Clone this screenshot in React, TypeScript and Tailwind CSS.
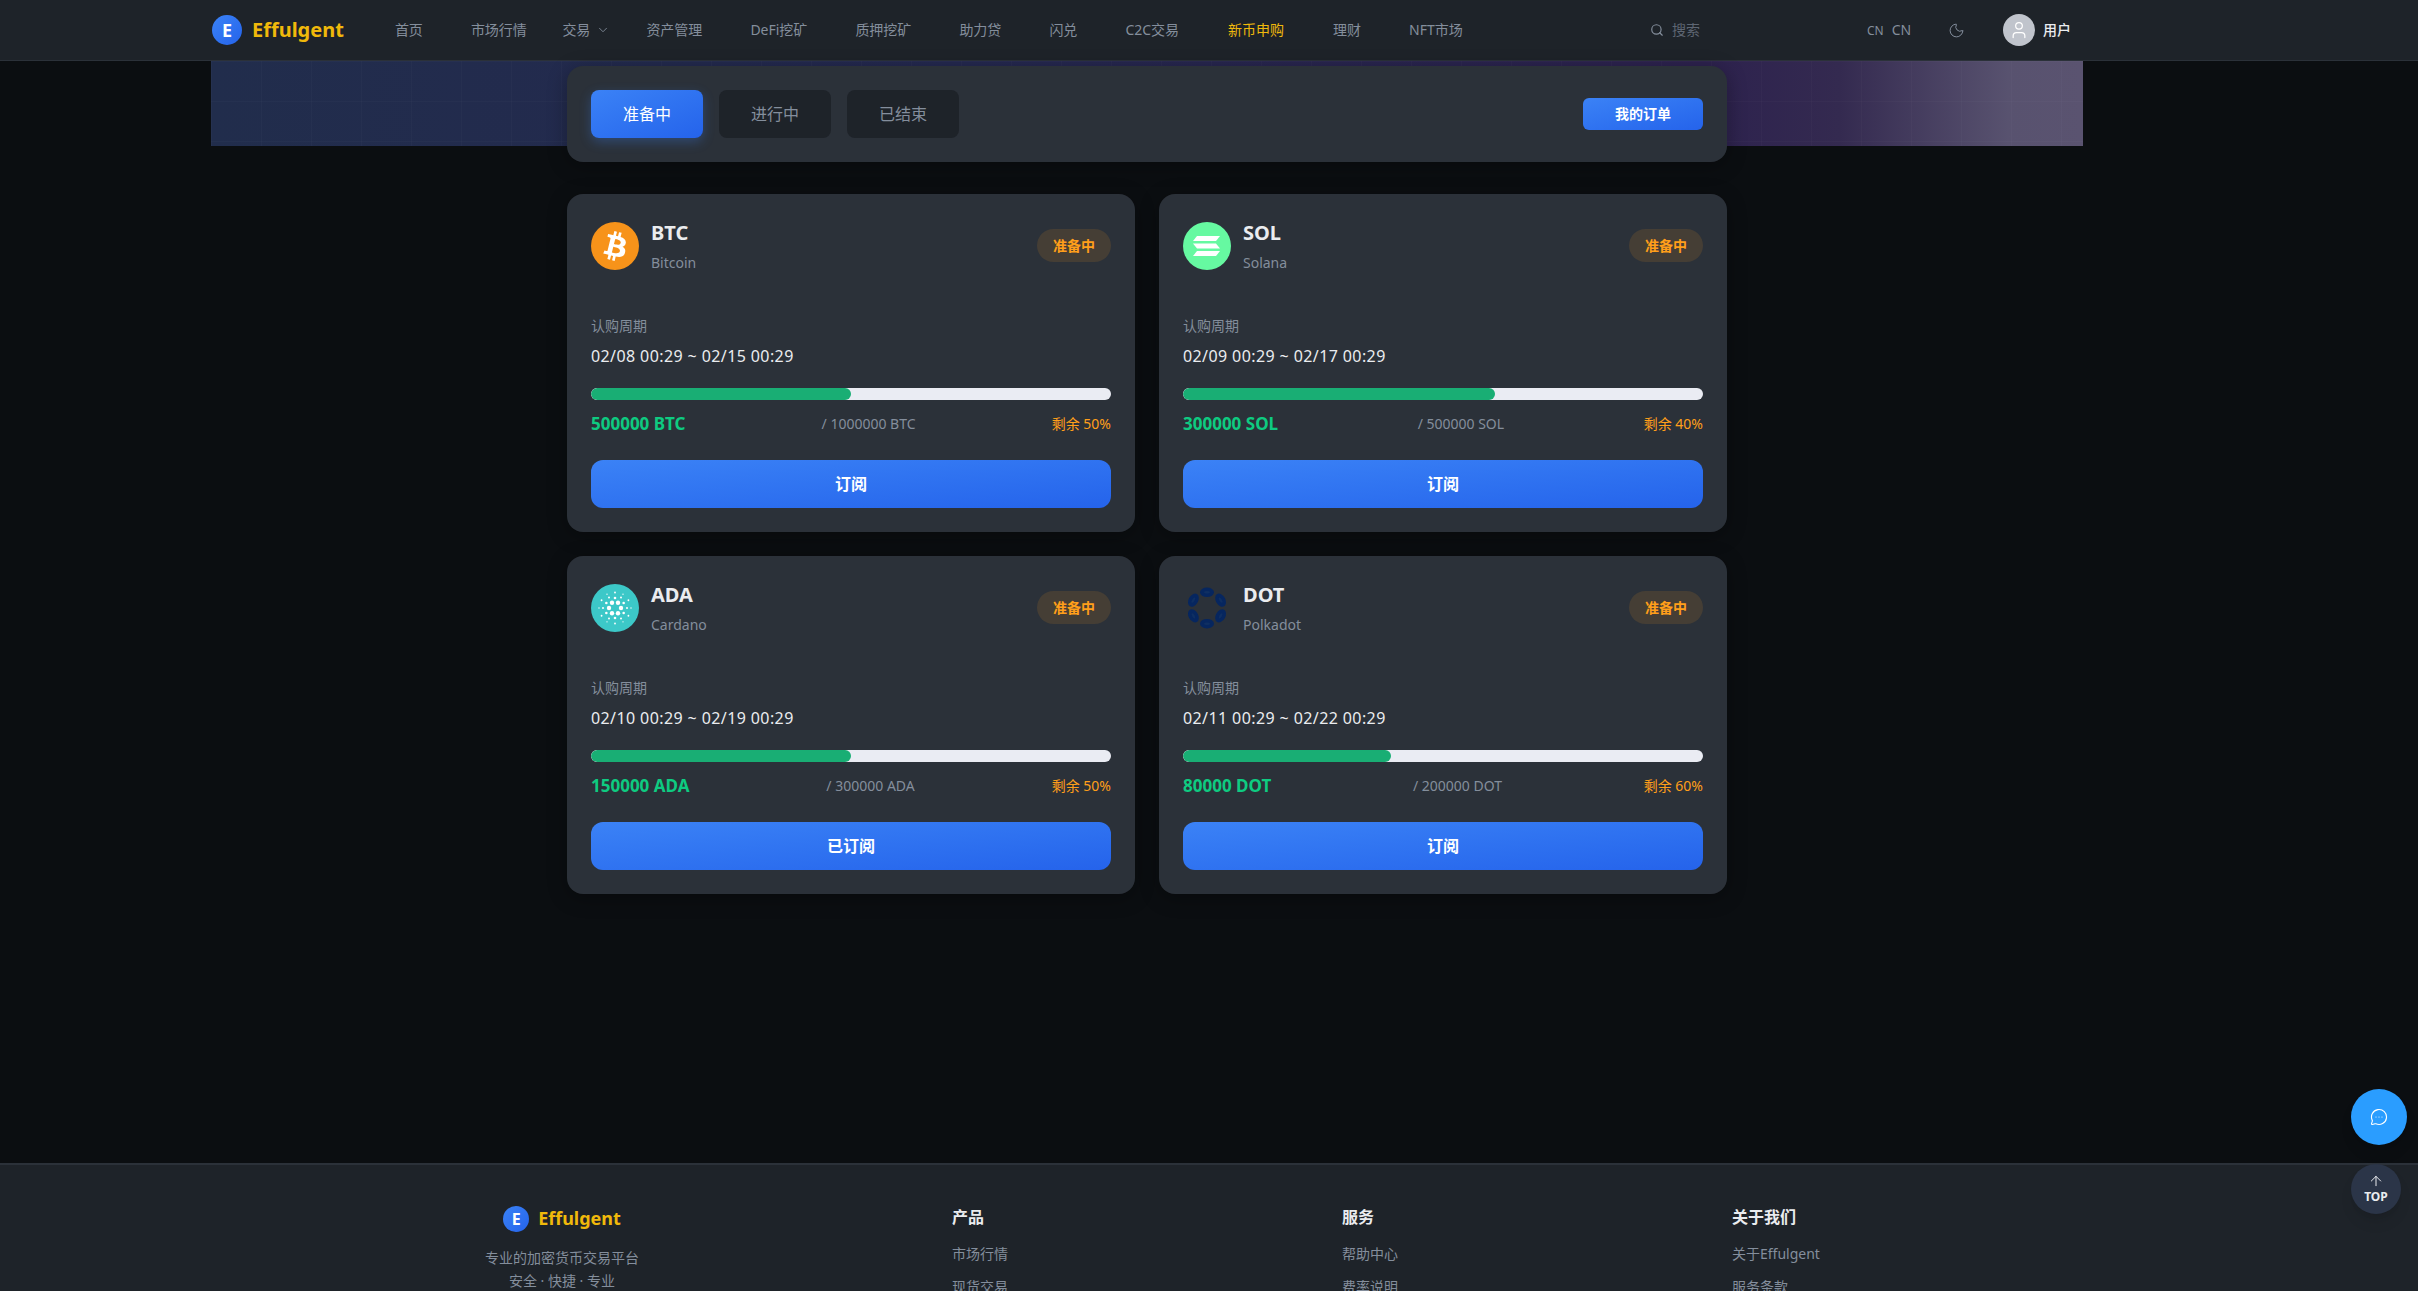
import React from 'react';
import { ArrowUp, ChevronDown, MessageCircleMore, Moon, Search, User } from 'lucide-react';

const navItems = ['首页', '市场行情', '交易', '资产管理', 'DeFi挖矿', '质押挖矿', '助力贷', '闪兑', 'C2C交易', '新币申购', '理财', 'NFT市场'];

const coins = [
  { symbol: 'BTC', name: 'Bitcoin', period: '02/08 00:29 ~ 02/15 00:29', pct: 50, sold: '500000 BTC', total: '/ 1000000 BTC', left: '剩余 50%', action: '订阅' },
  { symbol: 'SOL', name: 'Solana', period: '02/09 00:29 ~ 02/17 00:29', pct: 60, sold: '300000 SOL', total: '/ 500000 SOL', left: '剩余 40%', action: '订阅' },
  { symbol: 'ADA', name: 'Cardano', period: '02/10 00:29 ~ 02/19 00:29', pct: 50, sold: '150000 ADA', total: '/ 300000 ADA', left: '剩余 50%', action: '已订阅' },
  { symbol: 'DOT', name: 'Polkadot', period: '02/11 00:29 ~ 02/22 00:29', pct: 40, sold: '80000 DOT', total: '/ 200000 DOT', left: '剩余 60%', action: '订阅' },
];

const footerColumns = [
  { title: '产品', links: ['市场行情', '现货交易'] },
  { title: '服务', links: ['帮助中心', '费率说明'] },
  { title: '关于我们', links: ['关于Effulgent', '服务条款'] },
];

const ring = (count: number, radius: number, offset: number) =>
  Array.from({ length: count }, (_, i) => {
    const a = ((offset + (i * 360) / count) * Math.PI) / 180;
    return { x: 24 + radius * Math.cos(a), y: 24 + radius * Math.sin(a) };
  });

const CoinIcon: React.FC<{ symbol: string }> = ({ symbol }) => {
  if (symbol === 'BTC') {
    return (
      <svg viewBox="0 0 32 32" className="w-12 h-12 shrink-0">
        <circle cx="16" cy="16" r="16" fill="#f7931a" />
        <path
          fill="#fff"
          d="M23.189 14.02c.314-2.096-1.283-3.223-3.465-3.975l.708-2.84-1.728-.43-.69 2.765c-.454-.114-.92-.22-1.385-.326l.695-2.783L15.596 6l-.708 2.839c-.376-.086-.746-.17-1.104-.26l.002-.009-2.384-.595-.46 1.846s1.283.294 1.256.312c.7.175.826.638.805 1.006l-.806 3.235c.048.012.11.03.18.057l-.183-.045-1.13 4.532c-.086.212-.303.531-.793.41.018.025-1.256-.313-1.256-.313l-.858 1.978 2.25.561c.418.105.828.215 1.231.318l-.715 2.872 1.727.43.708-2.84c.472.127.93.245 1.378.357l-.706 2.828 1.728.43.715-2.866c2.948.558 5.164.333 6.097-2.333.752-2.146-.037-3.385-1.588-4.192 1.13-.26 1.98-1.003 2.207-2.538zm-3.95 5.538c-.533 2.147-4.148.986-5.32.695l.95-3.805c1.172.293 4.929.872 4.37 3.11zm.535-5.569c-.487 1.953-3.495.96-4.47.717l.86-3.45c.975.243 4.118.696 3.61 2.733z"
        />
      </svg>
    );
  }
  if (symbol === 'SOL') {
    return (
      <svg viewBox="0 0 48 48" className="w-12 h-12 shrink-0">
        <circle cx="24" cy="24" r="24" fill="#66f9a1" />
        <polygon fill="#fff" points="14,14 37,14 33,19 10,19" />
        <polygon fill="#fff" points="10,21.5 33,21.5 37,26.5 14,26.5" />
        <polygon fill="#fff" points="14,29 37,29 33,34 10,34" />
      </svg>
    );
  }
  if (symbol === 'ADA') {
    return (
      <svg viewBox="0 0 48 48" className="w-12 h-12 shrink-0">
        <circle cx="24" cy="24" r="24" fill="#3cc8c8" />
        {ring(6, 6, 0).map((d, i) => <circle key={i} cx={d.x} cy={d.y} r="2.2" fill="#fff" />)}
        {ring(6, 10, 30).map((d, i) => <circle key={i} cx={d.x} cy={d.y} r="1.3" fill="#fff" />)}
        {ring(6, 12, 0).map((d, i) => <circle key={i} cx={d.x} cy={d.y} r="1" fill="#fff" />)}
        {ring(6, 15.5, 30).map((d, i) => <circle key={i} cx={d.x} cy={d.y} r="0.9" fill="#fff" />)}
        {ring(6, 16, 0).map((d, i) => <circle key={i} cx={d.x} cy={d.y} r="0.7" fill="#fff" />)}
      </svg>
    );
  }
  return (
    <svg viewBox="0 0 48 48" className="w-12 h-12 shrink-0">
      {[0, 60, 120, 180, 240, 300].map((deg) => (
        <g key={deg} transform={`rotate(${deg} 24 24)`}>
          <ellipse cx="24" cy="8.3" rx="7" ry="4.8" fill="#06265f" />
          <ellipse cx="24" cy="8.3" rx="3" ry="1.2" fill="#0f2f62" />
        </g>
      ))}
    </svg>
  );
};

const Logo: React.FC<{ small?: boolean }> = ({ small }) => (
  <div className={small ? 'flex items-center gap-[9px]' : 'flex items-center gap-[10px]'}>
    <div className={small ? 'w-[26px] h-[26px] rounded-full bg-gradient-to-br from-[#3b82f6] to-[#2563eb] flex items-center justify-center text-white font-bold text-[16px] leading-none' : 'w-[30px] h-[30px] rounded-full bg-gradient-to-br from-[#3b82f6] to-[#2563eb] flex items-center justify-center text-white font-bold text-[18px] leading-none'}>
      E
    </div>
    <span className={small ? 'text-[18px] font-bold text-[#f0b90b]' : 'text-[20px] font-bold text-[#f0b90b]'}>Effulgent</span>
  </div>
);

const CoinCard: React.FC<{ coin: (typeof coins)[number] }> = ({ coin }) => (
  <div className="bg-[#2b3139] rounded-2xl p-6 h-[338px] shadow-[0_4px_20px_rgba(0,0,0,0.3)]">
    <div className="flex items-center justify-between h-[55px]">
      <div className="flex items-center gap-3">
        <CoinIcon symbol={coin.symbol} />
        <div>
          <div className="text-[20px] leading-[30px] font-bold text-[#eaecef]">{coin.symbol}</div>
          <div className="text-sm leading-[21px] mt-1 text-[#848e9c]">{coin.name}</div>
        </div>
      </div>
      <span className="px-4 py-1.5 rounded-[20px] bg-[#453e35] text-[#ff9f1a] text-sm leading-[21px] font-semibold">准备中</span>
    </div>
    <div className="mt-[42px] text-sm leading-[21px] text-[#848e9c]">认购周期</div>
    <div className="mt-2 text-base leading-6 tracking-[0.4px] text-[#eaecef]">{coin.period}</div>
    <div className="mt-5 h-3 rounded-md bg-[#eaecf3] overflow-hidden">
      <div className="h-full rounded-md bg-[#19ae74]" style={{ width: `${coin.pct}%` }} />
    </div>
    <div className="mt-3 h-6 flex items-center justify-between">
      <span className="text-[17px] font-bold text-[#0ecb81]">{coin.sold}</span>
      <span className="text-sm text-[#848e9c]">{coin.total}</span>
      <span className="text-sm text-[#ff9f1a]">{coin.left}</span>
    </div>
    <button className="mt-6 w-full h-12 rounded-xl bg-gradient-to-br from-[#3b82f6] to-[#2563eb] text-white text-base font-semibold">
      {coin.action}
    </button>
  </div>
);

export default function App() {
  return (
    <div className="relative h-[1291px] overflow-hidden flex flex-col bg-[#0b0e11] font-['Noto_Sans','Noto_Sans_CJK_SC',sans-serif]">
      <header className="h-[61px] shrink-0 bg-[#1e2329] border-b border-[#2b3139]">
        <div className="w-[2294px] h-full pl-[212px] pr-[223px] flex items-center">
          <Logo />
          <nav className="ml-[51px] flex items-center gap-12 text-sm text-[#848e9c]">
            {navItems.map((item) =>
              item === '交易' ? (
                <span key={item} className="-ml-[12.5px] -mr-[12px] flex items-center gap-[6px]">
                  {item}
                  <ChevronDown size={14} strokeWidth={1.5} />
                </span>
              ) : (
                <span key={item} className={item === '新币申购' ? 'ml-[1px] text-[#f0b90b]' : item === '理财' ? 'ml-[1px]' : ''}>{item}</span>
              ),
            )}
          </nav>
          <div className="ml-auto flex items-center">
            <div className="w-[217px] flex items-center gap-2 text-sm text-[#5e6673]">
              <Search size={14} className="text-[#848e9c]" />
              搜索
            </div>
            <div className="w-[81px] flex items-baseline gap-2 text-[#848e9c]">
              <span className="text-xs">CN</span>
              <span className="text-sm">CN</span>
            </div>
            <Moon size={17} strokeWidth={1.4} className="text-[#848e9c]" />
            <div className="ml-[38px] w-8 h-8 rounded-full bg-[#c0c4cc] flex items-center justify-center">
              <User size={20} strokeWidth={1.5} className="text-white" />
            </div>
            <span className="ml-2 text-sm font-medium text-[#eaecef]">用户</span>
          </div>
        </div>
      </header>

      <main className="h-[1102px] shrink-0 w-[2294px]">
        <div className="mx-auto w-[1872px] h-[85px] bg-[linear-gradient(rgba(255,255,255,0.018)_1px,transparent_1px),linear-gradient(90deg,rgba(255,255,255,0.018)_1px,transparent_1px),linear-gradient(90deg,#212d4c_0%,#24284f_40%,#2d224e_80%,#342a50_87%,#58526f_96%,#5a5370_100%)] bg-[size:50px_40px,50px_40px,100%_100%]" />
        <div className="relative mx-auto -mt-20 w-[1160px]">
          <div className="h-24 px-6 flex items-center justify-between rounded-2xl bg-[#2b3139] shadow-[0_4px_20px_rgba(0,0,0,0.3)]">
            <div className="flex gap-4">
              <button className="w-28 h-12 rounded-lg bg-gradient-to-br from-[#3b82f6] to-[#2563eb] text-white text-base shadow-[0_4px_12px_rgba(59,130,246,0.3)]">准备中</button>
              <button className="w-28 h-12 rounded-lg bg-[#1e2329] text-[#848e9c] text-base">进行中</button>
              <button className="w-28 h-12 rounded-lg bg-[#1e2329] text-[#848e9c] text-base">已结束</button>
            </div>
            <button className="w-[120px] h-8 rounded-md bg-gradient-to-br from-[#3b82f6] to-[#2563eb] text-white text-sm font-semibold">我的订单</button>
          </div>
          <div className="mt-8 grid grid-cols-2 gap-6">
            {coins.map((coin) => <CoinCard key={coin.symbol} coin={coin} />)}
          </div>
        </div>
      </main>

      <footer className="flex-1 bg-[#1e2329] border-t-2 border-[#2b3139]">
        <div className="w-[2294px]">
          <div className="mx-auto w-[1950px] pt-10 grid grid-cols-5">
            <div className="col-span-2 flex flex-col items-center">
              <Logo small />
              <p className="mt-[14px] text-sm leading-[23px] text-[#848e9c] text-center">
                专业的加密货币交易平台<br />安全 · 快捷 · 专业
              </p>
            </div>
            {footerColumns.map((col) => (
              <div key={col.title}>
                <h4 className="text-base leading-6 font-semibold text-[#eaecef]">{col.title}</h4>
                <ul className="mt-[14px] flex flex-col gap-3 text-sm leading-[21px] text-[#848e9c]">
                  {col.links.map((link) => <li key={link}>{link}</li>)}
                </ul>
              </div>
            ))}
          </div>
        </div>
      </footer>

      <button className="absolute right-[11px] top-[1089px] w-14 h-14 rounded-full bg-[#2a9dff] text-white flex items-center justify-center shadow-lg">
        <MessageCircleMore size={18} strokeWidth={1.5} />
      </button>
      <button className="absolute right-[17px] top-[1164px] w-[50px] h-[50px] rounded-full bg-[#2b3548] text-[#eaecef] flex flex-col items-center justify-center shadow-lg">
        <ArrowUp size={16} strokeWidth={1.5} />
        <span className="text-xs leading-4 font-bold">TOP</span>
      </button>
    </div>
  );
}
